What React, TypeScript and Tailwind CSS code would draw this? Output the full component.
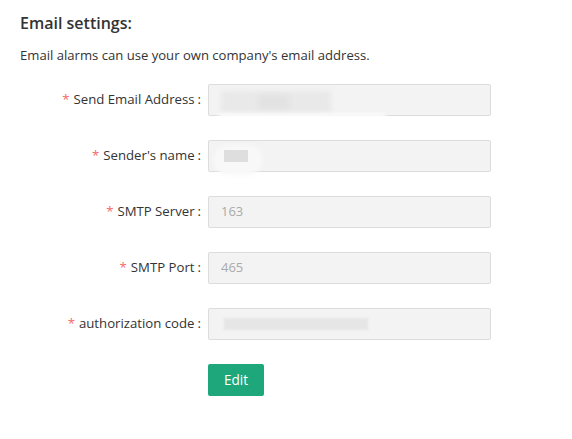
import React from "react"

const font = { fontFamily: '"Open Sans", "Noto Sans", "Noto Sans CJK SC", sans-serif' }

type Field = { label: string; value?: string; blur?: React.ReactNode }

const Blur = ({ className }: { className: string }) => (
    <div className={"absolute blur-[2px] " + className} />
)

const fields: Field[] = [
    {
        label: "Send Email Address",
        blur: (
            <>
                <Blur className="left-[12px] top-[6px] w-[110px] h-[22px] bg-[#e9e9e9]" />
                <Blur className="left-[50px] top-[10px] w-[30px] h-[14px] bg-[#e2e2e2]" />
                <Blur className="left-[8px] top-[29px] w-[170px] h-[10px] bg-white rounded-full" />
            </>
        ),
    },
    {
        label: "Sender's name",
        blur: (
            <>
                <Blur className="left-[4px] top-[4px] w-[50px] h-[30px] bg-[#f8f8f8] rounded-full" />
                <div className="absolute left-[15px] top-[9px] w-[24px] h-[12px] bg-[#dedede]" />
            </>
        ),
    },
    { label: "SMTP Server", value: "163" },
    { label: "SMTP Port", value: "465" },
    {
        label: "authorization code",
        blur: <div className="absolute left-[15px] top-[9px] w-[144px] h-[12px] bg-[#e6e6e6] blur-[1px]" />,
    },
]

export default function App() {
    return (
        <div className="w-[572px] h-[439px] bg-white text-[#333] pt-[12px] pl-[20px]" style={font}>
            <p className="text-[16px] font-semibold leading-[22px] text-[#333]">Email settings:</p>
            <p className="text-[13.1px] leading-[18px] mt-[12px] text-[#333]">
                Email alarms can use your own company's email address.
            </p>
            <div className="flex flex-col gap-[24px] mt-[20px] -ml-[20px]">
                {fields.map((f) => (
                    <div key={f.label} className="flex items-center h-[32px]">
                        <div className="w-[208px] h-[32px] flex items-center justify-end pr-[7px] text-[13.2px] whitespace-nowrap">
                            <span className="text-[#f56c6c] mr-[4px]">*</span>
                            <span>{f.label}</span>
                            <span className="ml-[3px]">:</span>
                        </div>
                        <div className="relative flex items-center px-[12px] w-[283px] h-[32px] bg-[#f3f3f3] border border-[#dcdcdc] rounded-[2px] text-[13px] text-[#aaa]">
                            {f.blur}
                            {f.value}
                        </div>
                    </div>
                ))}
                <div className="pl-[208px]">
                    <button className="w-[56px] h-[32px] bg-[#1da77a] text-white text-[13.6px] rounded-[2px]">Edit</button>
                </div>
            </div>
        </div>
    )
}
